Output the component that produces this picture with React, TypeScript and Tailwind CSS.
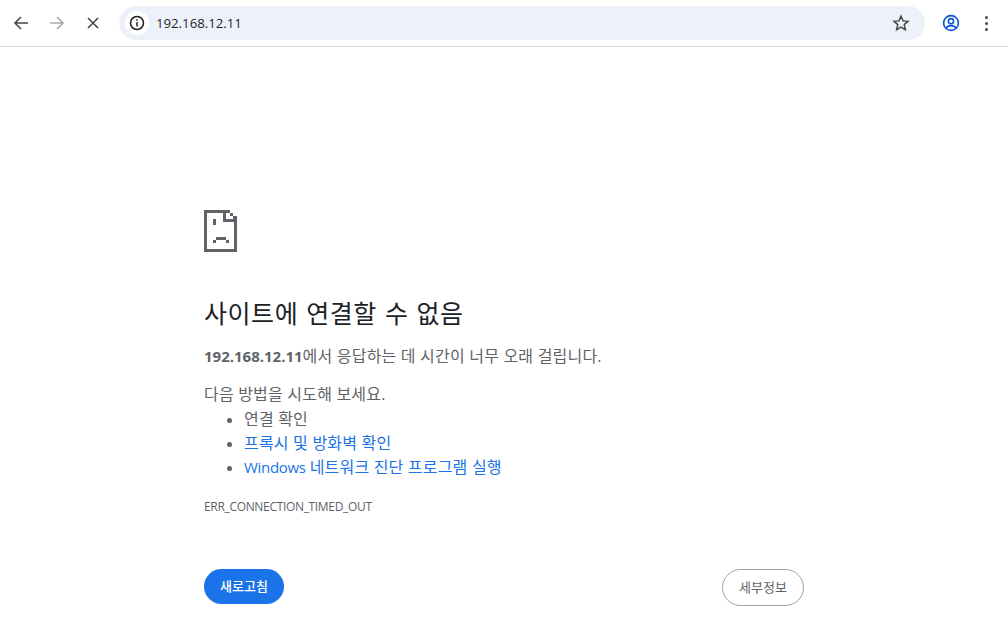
const bodyFont = "font-['Open_Sans','Noto_Sans_CJK_KR',sans-serif]";

function BackIcon({ className }: { className: string }) {
  return (
    <svg width="16" height="16" viewBox="0 0 16 16" className={className} fill="none" stroke="currentColor" strokeWidth="1.6">
      <path d="M15 8H2M8 2L2 8l6 6" />
    </svg>
  );
}

function SadPage() {
  // pixel art, same as chrome's error page
  return (
    <svg width="33" height="42" viewBox="0 0 33 42" shapeRendering="crispEdges" fill="#5f6368">
      <path d="M0 0h26v3h3v3h4v36H0zM3 3v36h27V12H19V3zM22 3v6h8V9h-1V6h-3V3z" fillRule="evenodd" />
      <path d="M9 9h3v6H9zM12 27h10v3H12zM9 30h3v3H9zM22 30h3v3h-3z" />
    </svg>
  );
}

// korean glyphs in the reference run wider than noto cjk at the same size
function Ko({ children }: { children: string }) {
  return <span className="text-[16px] tracking-[0.2px]">{children}</span>;
}

export default function App() {
  return (
    <div className={`h-[635px] w-[1008px] overflow-hidden bg-white ${bodyFont}`}>
      {/* toolbar */}
      <div className="flex h-[47px] items-center border-b border-[#dadce0] bg-white">
        <div className="flex w-[119px] shrink-0 items-center pl-[13px]">
          <BackIcon className="text-[#474747]" />
          <BackIcon className="ml-[20px] rotate-180 text-[#a9abad]" />
          <svg width="12" height="12" viewBox="0 0 12 12" className="ml-[22px] text-[#474747]" fill="none" stroke="currentColor" strokeWidth="1.6">
            <path d="M1 1l10 10M11 1L1 11" />
          </svg>
        </div>
        <div className="flex h-[34px] w-[806px] items-center rounded-full bg-[#edf2fa] pl-[6px] pr-[15px]">
          <div className="flex h-[24px] w-[24px] items-center justify-center rounded-full bg-white">
            <svg width="16" height="16" viewBox="0 0 16 16" fill="none" stroke="#1f1f1f" strokeWidth="1.5">
              <circle cx="8" cy="8" r="6.5" />
              <path d="M8 7v4.5M8 4.2v1.6" />
            </svg>
          </div>
          <span className="ml-[7px] pt-px font-['Open_Sans',sans-serif] text-[13.2px] text-[#1f1f1f]">192.168.12.11</span>
          <svg width="18" height="18" viewBox="0 0 18 18" className="ml-auto" fill="none" stroke="#474747" strokeWidth="1.5" strokeLinejoin="miter">
            <path d="M9 2.2l2 4.7 5 .4-3.8 3.3 1.2 5L9 13l-4.4 2.6 1.2-5L2 7.3l5-.4z" />
          </svg>
        </div>
        <svg width="18" height="18" viewBox="0 0 18 18" className="ml-[17px]" fill="none" stroke="#0b57d0" strokeWidth="1.6">
          <circle cx="9" cy="9" r="7.4" />
          <circle cx="9" cy="7.2" r="2.6" />
          <path d="M4.2 14c1-1.8 2.8-2.4 4.8-2.4s3.8.6 4.8 2.4" />
        </svg>
        <div className="ml-[25px] flex flex-col gap-[3px]">
          <span className="h-[3px] w-[3px] rounded-full bg-[#474747]" />
          <span className="h-[3px] w-[3px] rounded-full bg-[#474747]" />
          <span className="h-[3px] w-[3px] rounded-full bg-[#474747]" />
        </div>
      </div>

      {/* error page */}
      <div className="ml-[204px] w-[600px] pt-[163px]">
        <SadPage />
        <h1 className="mt-[44px] text-[25px] leading-[34px] font-normal tracking-[0.55px] text-[#202124] [word-spacing:1px]">사이트에 연결할 수 없음</h1>
        <p className="mt-[14px] h-[24px] text-[15px] leading-[24px] text-[#5f6368]">
          <strong className="font-bold">192.168.12.11</strong><Ko>에서 응답하는 데 시간이 너무 오래 걸립니다.</Ko>
        </p>
        <p className="mt-[14px] h-[24px] text-[15px] leading-[24px] text-[#5f6368]"><Ko>다음 방법을 시도해 보세요.</Ko></p>
        <ul className="mt-px list-disc pl-[40px] text-[15px] leading-[24px] text-[#5f6368]">
          <li className="h-[24px]"><Ko>연결 확인</Ko></li>
          <li className="h-[24px]"><a className="text-[#1a73e8]"><Ko>프록시 및 방화벽 확인</Ko></a></li>
          <li className="h-[24px]"><a className="text-[#1a73e8]"><span className="tracking-[-0.3px]">Windows</span> <Ko>네트워크 진단 프로그램 실행</Ko></a></li>
        </ul>
        <div className="mt-[19px] text-[12px] leading-[18px] tracking-[-0.33px] text-[#5f6368]">ERR_CONNECTION_TIMED_OUT</div>
        <div className="mt-[53px] flex items-start justify-between">
          <button className="h-[35px] w-[80px] rounded-full bg-[#1a73e8] text-[13px] font-medium text-white">새로고침</button>
          <button className="h-[37px] w-[82px] rounded-full border border-[#9aa0a6] bg-white text-[13px] text-[#5f6368]">세부정보</button>
        </div>
      </div>
    </div>
  );
}
